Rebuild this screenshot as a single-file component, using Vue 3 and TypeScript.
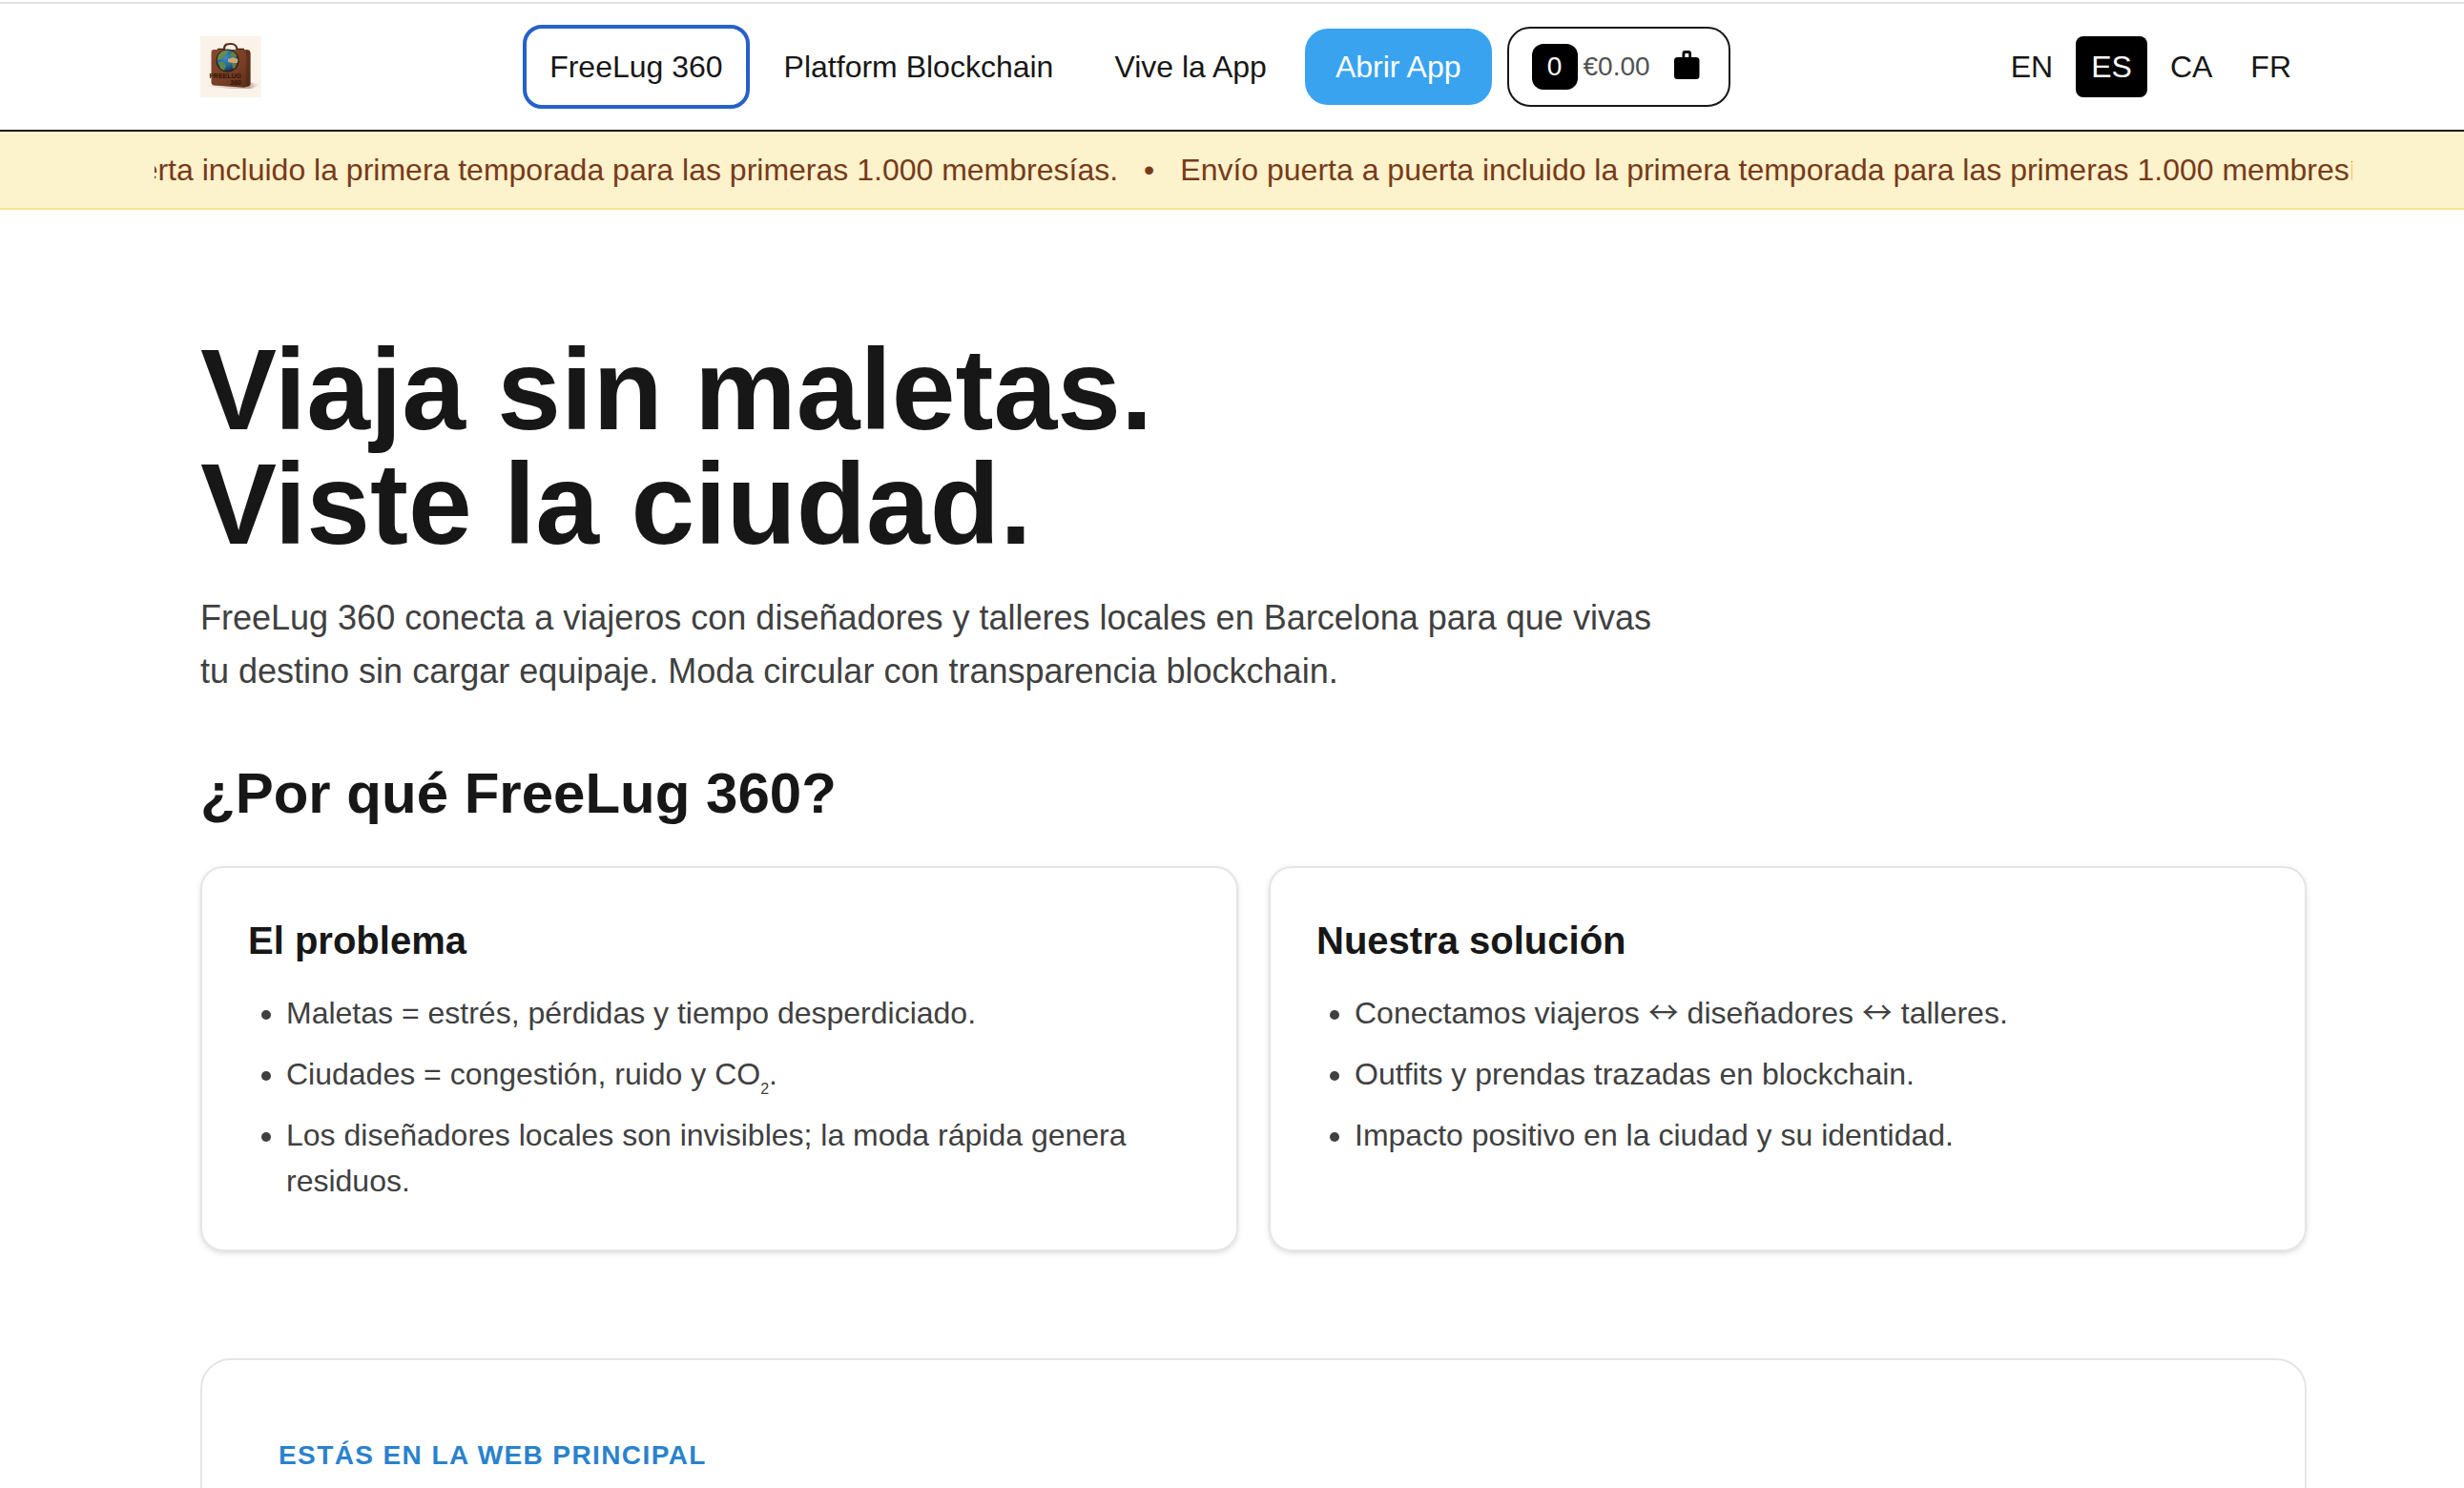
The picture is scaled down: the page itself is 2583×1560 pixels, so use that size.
<script setup lang="ts">
import { ref } from 'vue'

interface NavLink {
  label: string
  href: string
  current?: boolean
}

const navLinks: NavLink[] = [
  { label: 'FreeLug 360', href: '#inicio', current: true },
  { label: 'Platform Blockchain', href: '#blockchain' },
  { label: 'Vive la App', href: '#app' },
]

const languages: string[] = ['EN', 'ES', 'CA', 'FR']
const activeLanguage = ref<string>('ES')

const announcement =
  'Envío puerta a puerta incluido la primera temporada para las primeras 1.000 membresías.'

const cartCount = ref<number>(0)
const cartTotal = ref<number>(0)
</script>

<template>
  <div class="page">
    <header class="header">
      <div class="header-inner">
        <a class="logo" href="#inicio" aria-label="FreeLug 360">
          <svg viewBox="0 0 64 64" width="64" height="64" aria-hidden="true">
            <defs>
              <linearGradient id="leather" x1="0" y1="0" x2="1" y2="1">
                <stop offset="0" stop-color="#87492c" />
                <stop offset="0.6" stop-color="#773e25" />
                <stop offset="1" stop-color="#5a2c18" />
              </linearGradient>
              <radialGradient id="ocean" cx="0.4" cy="0.35" r="0.7">
                <stop offset="0" stop-color="#3c8cba" />
                <stop offset="0.6" stop-color="#22679a" />
                <stop offset="1" stop-color="#0d2c47" />
              </radialGradient>
              <linearGradient id="shade" x1="0" y1="0" x2="1" y2="0">
                <stop offset="0" stop-color="#e0d2c4" stop-opacity="0.2" />
                <stop offset="0.8" stop-color="#b9a592" />
                <stop offset="1" stop-color="#e9ddd0" stop-opacity="0" />
              </linearGradient>
              <clipPath id="globe"><circle cx="28.500" cy="25.500" r="11" /></clipPath>
            </defs>
            <rect width="64" height="64" fill="#fbf3ea" />
            <path d="M4 52 L50 48 L63 51 L54 55 L30 55 Z" fill="url(#shade)" />
            <path d="M25 14 C25 8 28 8 32 8 C36 8 38 9 38.500 14" fill="none" stroke="#5b2d1a" stroke-width="2.200" />
            <path d="M18 13.500 h6 M38 13.500 h8" stroke="#4a2414" stroke-width="1.500" />
            <path
              d="M14 14 H49 Q52.500 14 52.500 18 V50 Q52.500 52 50 52.500 L46 53.700 L14 51.500 Q11.500 51 11.500 48 V17 Q11.500 14 14 14 Z"
              fill="url(#leather)"
            />
            <path d="M48 15 Q48.500 34 47.500 53 L50 52.500 Q52.500 52 52.500 50 V18 Q52.500 14.500 48 15 Z" fill="#4f2615" opacity="0.550" />
            <circle cx="28.500" cy="25.500" r="12" fill="#2b1a12" />
            <circle cx="28.500" cy="25.500" r="11" fill="url(#ocean)" />
            <g clip-path="url(#globe)">
              <path d="M19 18 L24 14 L30 15 L28 18 L25 20 L22 24 L18 25 Z" fill="#6f8a45" />
              <path d="M19 27 L24 27 L27 31 L25 36 L21 34 Z" fill="#5f8748" />
              <path d="M31 18 L36 16 L39 21 L36 22 L32 21 Z" fill="#66823f" />
              <path d="M29 24 L34 22 L40 24 L39 28 L34 28 L29 27 Z" fill="#d0a66f" />
              <path d="M33 28 L38 28 L37 33 L34 34 Z" fill="#6b7a3f" />
            </g>
            <text class="logo-text" x="43" y="43.500" text-anchor="end">FREELUG</text>
            <text class="logo-text" x="43" y="50.500" text-anchor="end">360</text>
          </svg>
        </a>

        <nav class="nav" aria-label="Principal">
          <a
            v-for="link in navLinks"
            :key="link.label"
            class="nav-link"
            :class="{ current: link.current }"
            :href="link.href"
            >{{ link.label }}</a
          >
          <span class="actions">
            <a class="open-app" href="#abrir">Abrir App</a>
            <button class="cart" type="button" aria-label="Carrito">
              <span class="cart-count">{{ cartCount }}</span>
              <span class="cart-total">€{{ cartTotal.toFixed(2) }}</span>
              <svg class="cart-icon" viewBox="-2 0 40 40" width="40" height="40" aria-hidden="true">
                <path
                  fill-rule="evenodd"
                  d="M13.500 10 V6 Q13.500 3 16.500 3 H20 Q23 3 23 6 V10 H28 Q31.500 10 31.500 13.500 V29.500 Q31.500 33 28 33 H8.500 Q5 33 5 29.500 V13.500 Q5 10 8.500 10 Z M16.300 6.500 V10 H20.300 V6.500 Q20.300 6 19.800 6 H16.800 Q16.300 6 16.300 6.500 Z"
                />
              </svg>
            </button>
          </span>
        </nav>

        <div class="languages" role="group" aria-label="Idioma">
          <button
            v-for="lang in languages"
            :key="lang"
            type="button"
            class="lang"
            :class="{ active: lang === activeLanguage }"
            :aria-pressed="lang === activeLanguage"
            @click="activeLanguage = lang"
          >
            {{ lang }}
          </button>
        </div>
      </div>
    </header>

    <div class="banner">
      <div class="marquee">
        <div class="track">
          <span>{{ announcement }}</span>
          <span aria-hidden="true">•</span>
          <span>{{ announcement }}</span>
        </div>
      </div>
    </div>

    <main class="main">
      <section>
        <h1>Viaja sin maletas.<br />Viste la ciudad.</h1>
        <p class="lead">
          FreeLug 360 conecta a viajeros con diseñadores y talleres locales en Barcelona para que
          vivas tu destino sin cargar equipaje. Moda circular con transparencia blockchain.
        </p>
      </section>

      <section class="why">
        <h2>¿Por qué FreeLug 360?</h2>
        <div class="cards">
          <article class="card">
            <h3>El problema</h3>
            <ul>
              <li>Maletas = estrés, pérdidas y tiempo desperdiciado.</li>
              <li>Ciudades = congestión, ruido y CO<sub>2</sub>.</li>
              <li>Los diseñadores locales son invisibles; la moda rápida genera residuos.</li>
            </ul>
          </article>
          <article class="card">
            <h3>Nuestra solución</h3>
            <ul>
              <li>
                Conectamos viajeros <span class="arrow">↔</span> diseñadores
                <span class="arrow">↔</span> talleres.
              </li>
              <li>Outfits y prendas trazadas en blockchain.</li>
              <li>Impacto positivo en la ciudad y su identidad.</li>
            </ul>
          </article>
        </div>
      </section>

      <section class="panel">
        <p class="eyebrow">ESTÁS EN LA WEB PRINCIPAL</p>
      </section>
    </main>
  </div>
</template>

<style>
body {
  margin: 0;
  background: #fff;
}
</style>

<style scoped>
.page {
  --gutter-left: 162px;
  --gutter-right: 117px;
  box-sizing: border-box;
  height: 100vh;
  overflow: hidden;
  padding-top: 2px;
  background: #fff;
  color: #171717;
  font-family: 'Liberation Sans', Arial, Helvetica, sans-serif;
  font-size: 32px;
  line-height: 48px;
}

a {
  color: inherit;
  text-decoration: none;
}

button {
  margin: 0;
  font: inherit;
  color: inherit;
  cursor: pointer;
}

.header {
  border-top: 2px solid #e1e1e1;
  border-bottom: 2px solid #171717;
  padding: 0 var(--gutter-right) 0 var(--gutter-left);
}

.header-inner {
  display: flex;
  align-items: center;
  justify-content: space-between;
  padding: 24px 48px;
}

.logo,
.logo svg {
  display: block;
}

.logo-text {
  font-family: 'Liberation Sans Narrow', 'Liberation Sans', sans-serif;
  font-size: 7px;
  font-weight: 700;
  fill: #2f140a;
}

.nav,
.actions {
  display: flex;
  align-items: center;
  gap: 16px;
}

.nav-link {
  padding: 16px 24px;
  border-radius: 16px;
}

.nav-link.current {
  outline: 4px solid #2660cb;
}

.open-app {
  padding: 16px 32px;
  border-radius: 24px;
  background: #39a3f0;
  color: #fff;
}

.cart {
  display: flex;
  align-items: center;
  height: 84px;
  padding: 0 24px;
  border: 2px solid #171717;
  border-radius: 24px;
  background: #fff;
  font-size: 28px;
}

.cart-count {
  width: 48px;
  border-radius: 12px;
  background: #000;
  color: #fff;
  text-align: center;
}

.cart-total {
  margin: 0 18px 0 6px;
  color: #525252;
}

.cart-icon {
  display: block;
  fill: #000;
}

.languages {
  display: flex;
  gap: 8px;
}

.lang {
  padding: 8px 16px;
  border: 0;
  border-radius: 8px;
  background: transparent;
}

.lang.active {
  background: #000;
  color: #fff;
}

.banner {
  padding: 16px var(--gutter-right) 16px var(--gutter-left);
  border-bottom: 2px solid #fae58c;
  background: #fcf2cb;
  color: #783a1a;
}

.marquee {
  overflow: hidden;
}

.track {
  display: flex;
  gap: 27px;
  width: max-content;
  margin-left: -267px;
  white-space: nowrap;
}

.main {
  padding: 128px calc(var(--gutter-right) + 48px) 0 calc(var(--gutter-left) + 48px);
}

h1,
h2,
h3,
p,
ul {
  margin: 0;
}

h1 {
  font-size: 120px;
  line-height: 120px;
}

.lead {
  max-width: 1536px;
  margin-top: 32px;
  color: #404040;
  font-size: 36px;
  line-height: 56px;
}

.why {
  margin-top: 64px;
}

h2 {
  font-size: 60px;
  line-height: 72px;
}

.cards {
  display: grid;
  grid-template-columns: 1fr 1fr;
  gap: 32px;
  margin-top: 40px;
}

.card {
  padding: 48px;
  border: 2px solid #e5e5e5;
  border-radius: 24px;
  box-shadow:
    0 2px 6px rgba(0, 0, 0, 0.1),
    0 2px 4px -2px rgba(0, 0, 0, 0.1);
}

h3 {
  font-size: 40px;
  line-height: 56px;
}

ul {
  display: flex;
  flex-direction: column;
  gap: 16px;
  margin-top: 24px;
  padding-left: 40px;
  color: #404040;
}

sub {
  font-size: 16px;
  line-height: 0;
  vertical-align: -10px;
}

.arrow {
  font-family: 'Noto Sans CJK JP', sans-serif;
  line-height: 0;
}

.panel {
  margin-top: 112px;
  padding: 80px;
  border: 2px solid #e5e5e5;
  border-radius: 32px;
}

.eyebrow {
  color: #2a82cc;
  font-size: 28px;
  font-weight: 700;
  letter-spacing: 0.05em;
  line-height: 40px;
}
</style>
